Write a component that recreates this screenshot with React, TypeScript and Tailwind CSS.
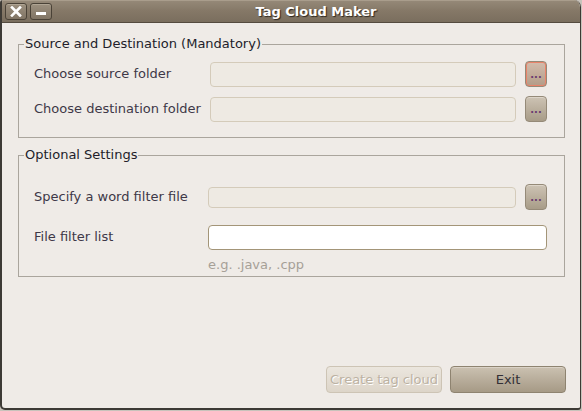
import React from "react";

function DotsButton({ focused = false }: { focused?: boolean }) {
  return (
    <button
      className={
        "ml-[9px] w-[22px] h-[26px] shrink-0 rounded-[4px] border border-[#958a78] flex items-end justify-center pb-[6px] text-[10px] leading-none font-bold tracking-[0px] text-[#6b3c70] " +
        (focused
          ? "bg-gradient-to-b from-[#d3bcac] to-[#b39c88] shadow-[inset_0_0_0_1px_#e9836a]"
          : "bg-gradient-to-b from-[#cdc3b4] to-[#a89c88] shadow-[inset_0_1px_0_#ddd5c9]")
      }
    >
      ...
    </button>
  );
}

function DisabledInput({ w, h }: { w: string; h: string }) {
  return (
    <div
      className={
        w +
        " " +
        h +
        " shrink-0 rounded-[4px] border border-[#d4cbba] bg-[#eeeae3]"
      }
    />
  );
}

export default function App() {
  return (
    <div className="w-[582px] h-[411px] bg-[#c8c3bb] font-['DejaVu_Sans','Liberation_Sans',sans-serif] overflow-hidden">
      <div className="w-[581px] h-[410px] flex flex-col bg-[#efebe7] rounded-tr-[7px] rounded-tl-[3px] rounded-bl-[5px] rounded-br-[3px] border-l-2 border-r border-b-2 border-[#3d3a35] overflow-hidden">
        {/* Title bar */}
        <div className="h-[23px] shrink-0 flex items-center bg-gradient-to-b from-[#968a79] via-[#857867] to-[#7a6e5e] border-b border-[#544b3f] shadow-[inset_0_1px_0_#a99d8c]">
          <div className="ml-[3px] w-[22px] h-[17px] rounded-[3px] border border-[#4a4237] bg-gradient-to-b from-[#9c907f] to-[#817565] shadow-[inset_0_1px_0_#b0a594] flex items-center justify-center">
            <svg width="12" height="11" viewBox="0 0 12 11">
              <path d="M2 1.5 L10 9.5 M10 1.5 L2 9.5" stroke="#ffffff" strokeWidth="2.6" strokeLinecap="square" />
            </svg>
          </div>
          <div className="ml-[3px] w-[22px] h-[17px] rounded-[3px] border border-[#4a4237] bg-gradient-to-b from-[#9c907f] to-[#817565] shadow-[inset_0_1px_0_#b0a594] flex items-end justify-center pb-[4px]">
            <div className="w-[10px] h-[3px] bg-white" />
          </div>
          <div className="flex-1 text-center text-[13px] font-bold text-white leading-none [text-shadow:1px_1px_1px_#2e271f]">
            Tag Cloud Maker
          </div>
        </div>

        {/* Body */}
        <div className="flex-1 flex flex-col pl-[16px] pr-[15px]">
          <fieldset className="mt-[13px] border border-[#aaa59d] pl-[15px] pr-[16px] pt-[9px] pb-[15px]">
            <legend className="ml-[-10px] px-[1px] text-[13px] leading-[16px] text-[#221d2a]">
              Source and Destination (Mandatory)
            </legend>
            <div className="flex items-center h-[26px]">
              <span className="w-[176px] shrink-0 text-[13px] text-[#3e3847]">Choose source folder</span>
              <DisabledInput w="w-[306px]" h="h-[25px]" />
              <DotsButton focused />
            </div>
            <div className="flex items-center h-[26px] mt-[9px]">
              <span className="w-[176px] shrink-0 text-[13px] text-[#3e3847]">Choose destination folder</span>
              <DisabledInput w="w-[306px]" h="h-[25px]" />
              <DotsButton />
            </div>
          </fieldset>

          <fieldset className="mt-[9px] border border-[#aaa59d] pl-[15px] pr-[16px] pt-[21px] pb-[3px]">
            <legend className="ml-[-10px] px-[1px] text-[13px] leading-[16px] text-[#221d2a]">
              Optional Settings
            </legend>
            <div className="flex items-center h-[26px]">
              <span className="w-[174px] shrink-0 text-[13px] text-[#3e3847]">Specify a word filter file</span>
              <DisabledInput w="w-[308px]" h="h-[21px]" />
              <DotsButton />
            </div>
            <div className="flex items-center h-[26px] mt-[14px]">
              <span className="w-[174px] shrink-0 text-[13px] text-[#3e3847]">File filter list</span>
              <div className="w-[339px] h-[25px] shrink-0 rounded-[4px] border border-[#a39578] bg-white" />
            </div>
            <div className="mt-[7px] pl-[174px] h-[16px] text-[13px] leading-[16px] text-[#a6a097]">
              e.g. .java, .cpp
            </div>
          </fieldset>

          <div className="flex-1" />

          <div className="flex justify-end gap-[8px] mb-[15px] mr-[-1px]">
            <button className="w-[116px] h-[27px] rounded-[4px] border border-[#cdc4b5] bg-gradient-to-b from-[#ebe6de] to-[#ddd5c9] text-[13px] text-[#bcb2a3] [text-shadow:1px_1px_0_#ffffff]">
              Create tag cloud
            </button>
            <button className="w-[116px] h-[27px] rounded-[4px] border border-[#8e8370] bg-gradient-to-b from-[#cbc1b1] to-[#a69a86] shadow-[inset_0_1px_0_#dad2c6] text-[13px] text-[#333036]">
              Exit
            </button>
          </div>
        </div>
      </div>
    </div>
  );
}
